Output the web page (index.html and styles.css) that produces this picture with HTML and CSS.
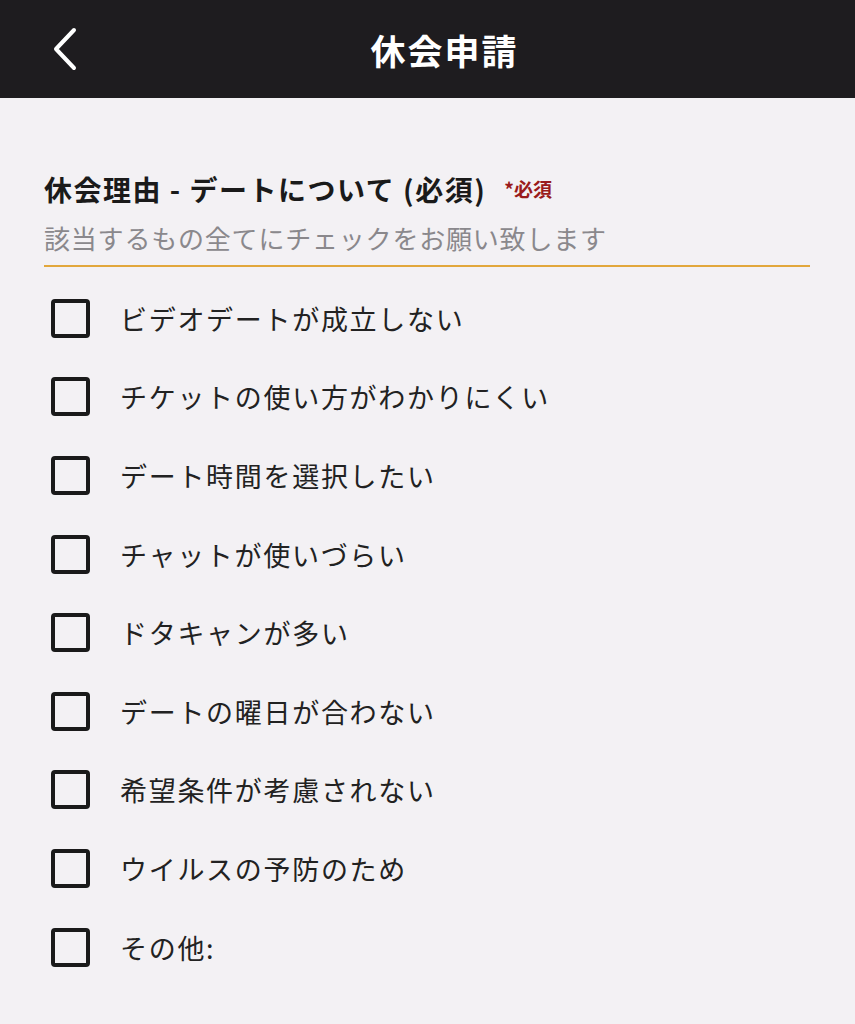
FILE: index.html
```html
<!DOCTYPE html>
<html lang="ja">
<head>
    <meta charset="UTF-8">
    <meta name="viewport" content="width=device-width, initial-scale=1.0">
    <title>休会申請</title>
    <link rel="stylesheet" href="styles.css">
</head>
<body>
    <!-- ヘッダー -->
    <div class="header">
        <span class="back">
            <svg width="30" height="44" viewBox="0 0 30 44">
                <path d="M24 3 L6 22 L24 41" fill="none" stroke="#fff" stroke-width="4" stroke-linecap="round" stroke-linejoin="round"/>
            </svg>
        </span>
        <h1 class="header_title">休会申請</h1>
    </div>

    <!-- フォーム -->
    <div class="form">
        <div class="question">
            <div class="question_title">休会理由 - デートについて (必須)<span class="required">*必須</span></div>
            <div class="question_desc">該当するもの全てにチェックをお願い致します</div>
        </div>

        <ul class="options">
            <li><span class="box"></span>ビデオデートが成立しない</li>
            <li><span class="box"></span>チケットの使い方がわかりにくい</li>
            <li><span class="box"></span>デート時間を選択したい</li>
            <li><span class="box"></span>チャットが使いづらい</li>
            <li><span class="box"></span>ドタキャンが多い</li>
            <li><span class="box"></span>デートの曜日が合わない</li>
            <li><span class="box"></span>希望条件が考慮されない</li>
            <li><span class="box"></span>ウイルスの予防のため</li>
            <li><span class="box"></span>その他:</li>
        </ul>
    </div>
</body>
</html>
```

FILE: styles.css
```css
*{
    margin: 0;
    padding: 0;
    box-sizing: border-box;
}
li{
    list-style: none;
}
body{
    background: #f3f1f4;
    font-family: "Noto Sans CJK JP", "Noto Sans", sans-serif;
    color: #222;
}
.header{
    height: 98px;
    background: #1e1c1f;
    display: flex;
    align-items: center;
    justify-content: center;
    position: relative;
}
.header .back{
    position: absolute;
    left: 50px;
    top: 27px;
    display: flex;
}
.header_title{
    color: #fff;
    font-size: 35px;
    font-weight: 700;
    line-height: 1;
    letter-spacing: 2px;
    margin-left: 34px;
}
.form{
    padding: 73px 45px 0 44px;
}
.question{
    border-bottom: 2px solid #e2a73c;
    padding-bottom: 9px;
}
.question_title{
    font-size: 28px;
    font-weight: 700;
    line-height: 36px;
    letter-spacing: 1.5px;
    color: #1a1a1a;
    display: flex;
    align-items: center;
}
.required{
    font-size: 19px;
    color: #9a1b1b;
    margin-left: 18px;
    font-weight: 700;
    letter-spacing: 0;
}
.question_desc{
    margin-top: 13px;
    font-size: 26px;
    line-height: 36px;
    letter-spacing: 0.8px;
    color: #8a888c;
    font-weight: 400;
}
.options{
    padding-top: 12px;
}
.options li{
    height: 78.6px;
    display: flex;
    align-items: center;
    font-size: 27px;
    letter-spacing: 1.7px;
    color: #222;
}
.options .box{
    width: 39px;
    height: 39px;
    border: 4px solid #1a1a1a;
    border-radius: 4px;
    margin-left: 7px;
    margin-right: 30px;
    flex-shrink: 0;
}
```
